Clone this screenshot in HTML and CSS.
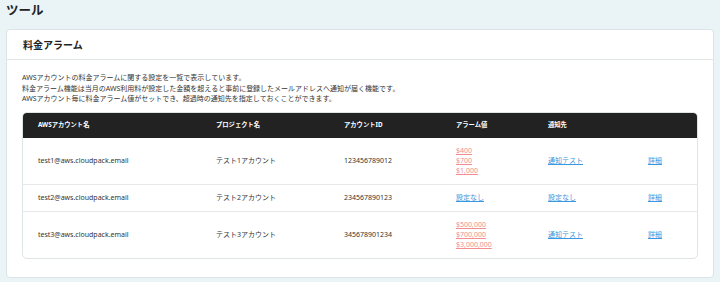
FILE: index.html
```html
<!DOCTYPE html>
<html lang="ja">
<head>
    <meta charset="UTF-8">
    <title>ツール</title>
    <link rel="stylesheet" href="styles.css">
</head>
<body>
    <div class="page">
        <h1 class="page-title">ツール</h1>

        <div class="card">
            <div class="card-header">料金アラーム</div>
            <div class="card-body">
                <p class="desc">
                    AWSアカウントの料金アラームに関する設定を一覧で表示しています。<br>
                    料金アラーム機能は当月のAWS利用料が設定した金額を超えると事前に登録したメールアドレスへ通知が届く機能です。<br>
                    AWSアカウント毎に料金アラーム値がセットでき、超過時の通知先を指定しておくことができます。
                </p>

                <div class="table-wrap">
                    <table class="alarm-table">
                        <thead>
                            <tr>
                                <th class="col-account">AWSアカウント名</th>
                                <th class="col-project">プロジェクト名</th>
                                <th class="col-id">アカウントID</th>
                                <th class="col-alarm">アラーム値</th>
                                <th class="col-notify">通知先</th>
                                <th></th>
                            </tr>
                        </thead>
                        <tbody>
                            <tr>
                                <td><span class="cell">test1@aws.cloudpack.email</span></td>
                                <td><span class="cell">テスト1アカウント</span></td>
                                <td><span class="cell">123456789012</span></td>
                                <td>
                                    <span class="cell"><a class="price">$400</a></span>
                                    <span class="cell"><a class="price">$700</a></span>
                                    <span class="cell"><a class="price">$1,000</a></span>
                                </td>
                                <td><span class="cell"><a class="link">通知テスト</a></span></td>
                                <td><span class="cell"><a class="link">詳細</a></span></td>
                            </tr>
                            <tr>
                                <td><span class="cell">test2@aws.cloudpack.email</span></td>
                                <td><span class="cell">テスト2アカウント</span></td>
                                <td><span class="cell">234567890123</span></td>
                                <td><span class="cell"><a class="link">設定なし</a></span></td>
                                <td><span class="cell"><a class="link">設定なし</a></span></td>
                                <td><span class="cell"><a class="link">詳細</a></span></td>
                            </tr>
                            <tr>
                                <td><span class="cell">test3@aws.cloudpack.email</span></td>
                                <td><span class="cell">テスト3アカウント</span></td>
                                <td><span class="cell">345678901234</span></td>
                                <td>
                                    <span class="cell"><a class="price">$500,000</a></span>
                                    <span class="cell"><a class="price">$700,000</a></span>
                                    <span class="cell"><a class="price">$3,000,000</a></span>
                                </td>
                                <td><span class="cell"><a class="link">通知テスト</a></span></td>
                                <td><span class="cell"><a class="link">詳細</a></span></td>
                            </tr>
                        </tbody>
                    </table>
                </div>
            </div>
        </div>
    </div>
</body>
</html>
```

FILE: styles.css
```css
body {
    margin: 0;
    background: #eaf3f5;
    color: #333;
    font-family: "Noto Sans", "Noto Sans CJK JP", sans-serif;
}

.page {
    padding: 2px 6px 6px;
}

.page-title {
    margin: 0 0 9px;
    font-size: 12.5px;
    line-height: 18px;
    font-weight: 700;
    color: #222;
}

.card {
    background: #fff;
    border: 1px solid #dbe4e8;
    border-radius: 4px;
}

.card-header {
    height: 29px;
    padding-left: 16px;
    display: flex;
    align-items: center;
    font-size: 10px;
    font-weight: 700;
    color: #222;
    border-bottom: 1px solid #e1e6e8;
}

.card-body {
    padding: 13px 15px 18px;
}

.desc {
    margin: 0 0 7px;
    font-size: 7px;
    line-height: 10.5px;
    color: #333;
}

.table-wrap {
    border: 1px solid #dfe4e6;
    border-radius: 5px;
    overflow: hidden;
}

.alarm-table {
    width: 100%;
    border-collapse: collapse;
    font-size: 7px;
    line-height: 10px;
}

.alarm-table th {
    background: #222;
    color: #fff;
    font-size: 6.3px;
    font-weight: 700;
    text-align: left;
    height: 25px;
    padding: 0 0 0 15px;
}

.alarm-table td {
    padding: 8px 0 8px 15px;
    border-top: 1px solid #e6e9eb;
    color: #333;
    vertical-align: middle;
}

.alarm-table tbody tr:first-child td {
    border-top: none;
}

.cell {
    display: block;
    height: 10px;
    white-space: nowrap;
}

.col-account { width: 163px; }
.col-project { width: 113px; }
.col-id { width: 97px; }
.col-alarm { width: 77px; }
.col-notify { width: 85px; }

.price {
    color: #f28e8e;
    text-decoration: underline;
}

.link {
    color: #3b97de;
    text-decoration: underline;
}
```
